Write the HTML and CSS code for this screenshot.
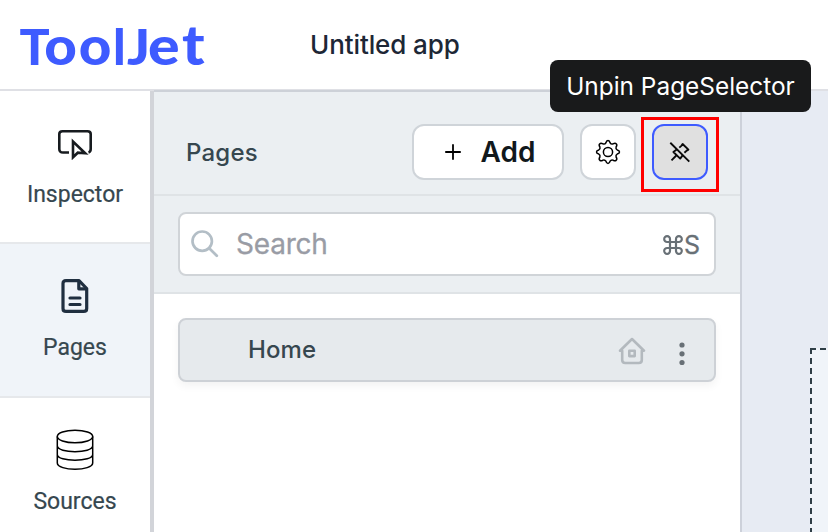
FILE: index.html
```html
<!DOCTYPE html>
<html lang="en">
<head>
<meta charset="utf-8">
<title>ToolJet</title>
<link rel="stylesheet" href="styles.css">
</head>
<body>
<div class="app">
  <header class="topbar">
    <svg class="logo" width="200" height="88" viewBox="0 -14 200 88" role="img" aria-label="ToolJet"><text transform="translate(3.5 50)">T</text><text transform="translate(28.3 50) scale(1.13 1.08)">o</text><text transform="translate(62.8 50) scale(1.13 1.08)">o</text><text transform="translate(97 50)">l</text><text transform="translate(111 50) scale(1.07 1)">J</text><text transform="translate(132 50) scale(1.18 1.08)">e</text><text transform="translate(166 50) scale(1.2 1.12)">t</text></svg>
    <span class="app-name">Untitled app</span>
  </header>
  <div class="workspace">
    <nav class="sidebar">
      <a class="nav-item">
        <svg width="36" height="32" viewBox="0 0 36 32" fill="none" stroke="#171b1f" stroke-width="2.6" stroke-linejoin="round"><path d="M12 24.5H6Q2.3 24.5 2.3 21V6Q2.3 3.2 5.5 3.2H30.5Q33.7 3.2 33.7 6V21Q33.7 23.8 31.5 24.5"/><path d="M16 13.5V29.3L20.8 24.7L28.2 25.2Z" stroke-linejoin="miter"/></svg>
        <span class="nav-label inspector">Inspector</span>
      </a>
      <a class="nav-item active">
        <svg width="28" height="36" viewBox="0 0 28 36" fill="none" stroke="#202f40" stroke-width="3.2" stroke-linecap="round" stroke-linejoin="round"><path d="M5 2.6H18L25.7 10.5V30.4Q25.7 33.4 22.7 33.4H5Q2 33.4 2 30.4V5.6Q2 2.6 5 2.6Z"/><path d="M17.8 3V10.8H25M9 20H19M9 26.5H19"/></svg>
        <span class="nav-label pages">Pages</span>
      </a>
      <a class="nav-item">
        <svg width="38" height="42" viewBox="0 0 38 42" fill="none" stroke="#000" stroke-width="1.5"><ellipse cx="19" cy="7.5" rx="17.7" ry="6.3"/><path d="M1.3 7.5V34C1.3 42.2 36.7 42.2 36.7 34V7.5M1.3 16.8C1.3 24.6 36.7 24.6 36.7 16.8M1.3 25.4C1.3 33.2 36.7 33.2 36.7 25.4"/></svg>
        <span class="nav-label sources">Sources</span>
      </a>
    </nav>
    <section class="panel">
      <div class="panel-head">
        <h2 class="panel-title">Pages</h2>
        <button class="btn add"><svg width="16" height="16" viewBox="0 0 16 16" stroke="#000" stroke-width="1.8" stroke-linecap="round"><path d="M8 .9V15.1M.9 8H15.1"/></svg><span>Add</span></button>
        <button class="btn square"><svg width="26" height="26" viewBox="-13 -13 26 26" fill="none" stroke="#000" stroke-width="1.5" stroke-linejoin="round"><circle r="4.6"/><path d="M-2.1 -9.2Q-1.6 -11.5 0 -11.5Q1.6 -11.5 2.1 -9.2Q3.1 -7.5 5 -8.1Q7.2 -9.5 8.2 -8.2Q9.5 -7.2 8.1 -5Q7.5 -3.1 9.2 -2.1Q11.5 -1.6 11.5 0Q11.5 1.6 9.2 2.1Q7.5 3.1 8.1 5Q9.5 7.2 8.2 8.2Q7.2 9.5 5 8.1Q3.1 7.5 2.1 9.2Q1.6 11.5 0 11.5Q-1.6 11.5 -2.1 9.2Q-3.1 7.5 -5 8.1Q-7.2 9.5 -8.2 8.2Q-9.5 7.2 -8.1 5Q-7.5 3.1 -9.2 2.1Q-11.5 1.6 -11.5 0Q-11.5 -1.6 -9.2 -2.1Q-7.5 -3.1 -8.1 -5Q-9.5 -7.2 -8.2 -8.2Q-7.2 -9.5 -5 -8.1Q-3.1 -7.5 -2.1 -9.2Z"/></svg></button>
        <div class="pin-wrap">
          <button class="btn square pinned"><svg width="22" height="22" viewBox="0 0 22 22" fill="none" stroke="#0a0a0a" stroke-width="1.9" stroke-linejoin="round"><path d="M1.3 1.8L20.3 20.6M2.5 19.3L7.3 14.5"/><path d="M10.3 6.6L12.6 4.6L13.6 3L19.4 8.6L17.7 9.6L15.4 11.8M7.7 8.5L4.4 11L11.2 17.6L13.6 14.4"/></svg></button>
          <div class="highlight"></div>
          <div class="tooltip">Unpin PageSelector</div>
        </div>
      </div>
      <div class="search-area">
        <div class="search">
          <svg width="28" height="28" viewBox="0 0 28 28" fill="none" stroke="#b3bec6" stroke-width="2.7" stroke-linecap="round"><circle cx="11.2" cy="11.2" r="9.7"/><path d="M18.2 18.2L25.8 25.8"/></svg>
          <span class="placeholder">Search</span>
          <span class="shortcut"><svg width="20" height="20" viewBox="0 0 20 20" fill="none" stroke="#687076" stroke-width="2.2"><path d="M7 7H13V13H7ZM7 7H4.2A2.9 2.9 0 1 1 7 4.2ZM13 7V4.2A2.9 2.9 0 1 1 15.8 7ZM13 13H15.8A2.9 2.9 0 1 1 13 15.8ZM7 13V15.8A2.9 2.9 0 1 1 4.2 13Z"/></svg>S</span>
        </div>
      </div>
      <div class="page-list">
        <div class="page-row">
          <span class="page-name">Home</span>
          <svg class="home" width="28" height="28" viewBox="0 0 28 28" fill="none" stroke="#b3b9be" stroke-width="2.6" stroke-linecap="round" stroke-linejoin="round"><path d="M4.2 13.7H2L14 2L26 13.7H23.8V23Q23.8 26 20.8 26H7.2Q4.2 26 4.2 23Z"/><path d="M11.3 13.7H16.7V19.1H11.3Z"/></svg>
          <svg class="kebab" width="6" height="24" viewBox="0 0 6 24" fill="#687076"><circle cx="3" cy="3" r="2.6"/><circle cx="3" cy="11.8" r="2.6"/><circle cx="3" cy="20.5" r="2.6"/></svg>
        </div>
      </div>
    </section>
    <main class="canvas"><div class="drop-zone">
      <svg width="30" height="190" fill="none" stroke="#2f3e46" stroke-width="2"><path d="M0 1H30" stroke-dasharray="6 4"/><path d="M1 0V190" stroke-dasharray="6 4"/></svg>
    </div></main>
  </div>
</div>
</body>
</html>
```

FILE: styles.css
```css
* { box-sizing: border-box; }
body { margin: 0; font-family: Inter, "Liberation Sans", sans-serif; background: #fff; }
.app { width: 828px; height: 532px; overflow: hidden; display: flex; flex-direction: column; }
.topbar { height: 91px; flex: none; display: flex; align-items: center; border-bottom: 2px solid #dfe0e5; }
.logo { margin-left: 16px; font: 900 50px Lato, sans-serif; fill: #3e5bff; flex: none; overflow: visible; }
.app-name { margin-left: 94px; font-size: 26px; font-weight: 500; color: #1d2736; letter-spacing: -.1px; white-space: nowrap; }
.workspace { flex: 1; min-height: 0; display: flex; }
.sidebar { width: 154px; flex: none; border-right: 4px solid #d2d4d9; }
.nav-item { height: 153px; display: flex; flex-direction: column; align-items: center; border-bottom: 2px solid #e6e8eb; padding-top: 37px; }
.nav-item.active { background: #f0f4f9; height: 154px; padding-top: 34px; }
.nav-item:last-child { padding-top: 31px; }
.nav-label { font: 400 23px/28px Roboto, sans-serif; color: #36474f; white-space: nowrap; -webkit-text-stroke: .2px #36474f; }
.inspector { margin-top: 21px; }
.pages { margin-top: 20px; }
.sources { margin-top: 17px; }
.panel { width: 588px; flex: none; border-right: 2px solid #cdd1da; background: #fff; }
.panel-head { height: 106px; margin-top: -1px; background: #ebeff2; border-top: 2px solid #cdd1d8; border-bottom: 2px solid #dfe3e6; display: flex; align-items: center; padding: 17px 32px 0; }
.panel-title { margin: 2px auto 0 0; font-size: 24px; font-weight: 500; color: #36474f; letter-spacing: .2px; }
.btn { height: 56px; border: 2px solid #cfd4d9; border-radius: 12px; background: #fff; display: flex; align-items: center; justify-content: center; padding: 0; font-family: inherit; }
.add { width: 152px; gap: 20px; padding-left: 4px; font-size: 28px; font-weight: 600; color: #11181c; }
.square { width: 56px; margin-left: 16px; }
.pin-wrap { position: relative; }
.pinned { border-color: #3e5bff; background: #e0e0e0; }
.highlight { position: absolute; left: 5px; top: -7px; width: 78px; height: 75px; border: 3px solid #f00; }
.tooltip { position: absolute; left: -86px; top: -64px; width: 261px; height: 52px; border-radius: 8px; background: #191a1b; color: #fff; font-size: 24.4px; line-height: 52px; text-align: center; white-space: nowrap; z-index: 2; }
.search-area { height: 98px; background: #ebeff2; border-bottom: 2px solid #dfe3e6; padding: 16px 24px; }
.search { height: 64px; background: #fff; border: 2px solid #d0d4d8; border-radius: 8px; display: flex; align-items: center; padding: 0 14px 0 11px; }
.placeholder { margin-left: 17px; font-size: 28px; color: #999ca5; letter-spacing: -.2px; -webkit-text-stroke: .3px #999ca5; }
.shortcut { margin-left: auto; padding-top: 2px; display: flex; align-items: center; gap: 1px; color: #687076; font-size: 25px; -webkit-text-stroke: .3px #687076; }
.page-list { padding: 24px; }
.page-row { height: 64px; border: 2px solid #cdd1d6; border-radius: 8px; background: #e6eaed; box-shadow: 0 4px 8px rgba(0,0,0,.05); display: flex; align-items: center; padding: 0 29px 0 68px; }
.page-name { font-size: 24px; font-weight: 500; color: #36474f; letter-spacing: .1px; margin: 0 auto 2px 0; }
.home { margin-top: 2px; }
.kebab { margin: 7px 0 0 33px; }
.canvas { flex: 1; background: #e7ebf3; padding: 257px 0 0 68px; }
.drop-zone { background: #f0f4f9; height: 190px; overflow: hidden; }
```
